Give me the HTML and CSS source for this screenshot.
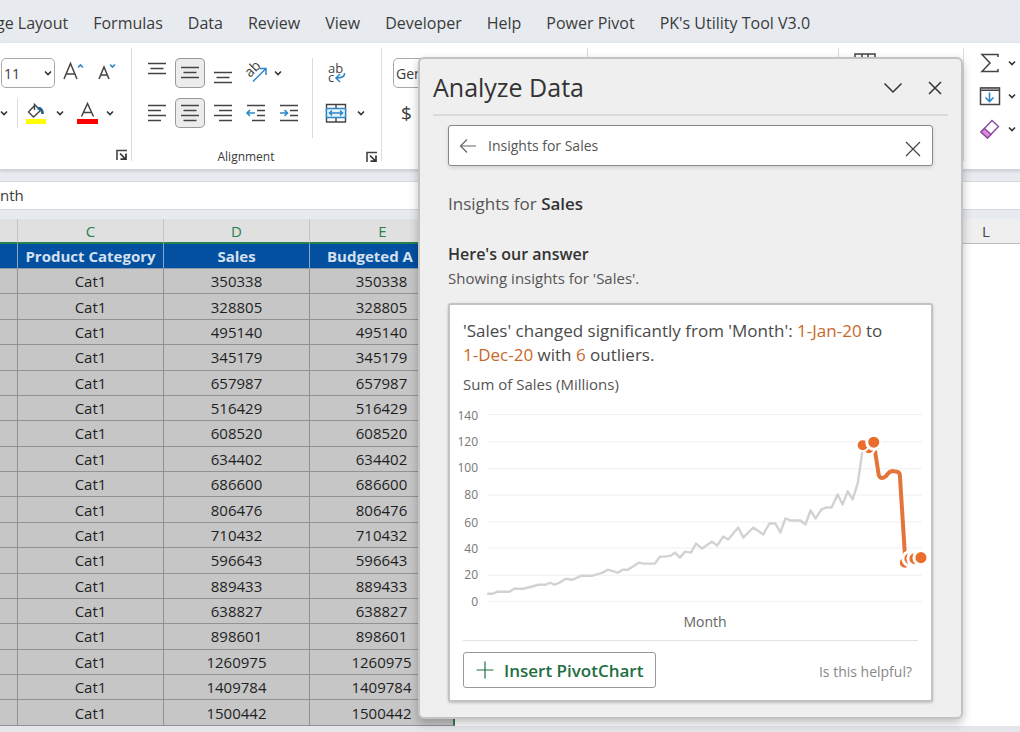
FILE: index.html
```html
<!DOCTYPE html>
<html lang="en">
<head>
<meta charset="utf-8">
<title>Analyze Data</title>
<link rel="stylesheet" href="styles.css">
</head>
<body>
<svg class="defs" aria-hidden="true">
  <symbol id="chev" viewBox="0 0 8 8"><path d="M1 2.500L4 5.500L7 2.500" fill="none" stroke="#333" stroke-width="1.600"/></symbol>
  <symbol id="launcher" viewBox="0 0 12 12"><path d="M1 11V1.500H11" fill="none" stroke="#444" stroke-width="1.600"/><path d="M4 4.500L9 9.500M10 4.500V10.200H4.500" fill="none" stroke="#333" stroke-width="1.700"/></symbol>
</svg>
<div class="app">
  <nav class="tabs">
    <button class="tab">ge Layout</button>
    <button class="tab">Formulas</button>
    <button class="tab">Data</button>
    <button class="tab">Review</button>
    <button class="tab">View</button>
    <button class="tab">Developer</button>
    <button class="tab">Help</button>
    <button class="tab">Power Pivot</button>
    <button class="tab">PK's Utility Tool V3.0</button>
  </nav>

  <div class="ribbon">
    <section class="group group-font">
      <div class="row">
        <label class="combo combo-size"><select aria-label="Font size"><option>11</option></select><svg class="chev"><use href="#chev"/></svg></label>
        <button class="tool" aria-label="Increase font size"><svg viewBox="0 0 30 30"><path d="M5 21L11.500 5.500L18 21M7.200 16H15.800" fill="none" stroke="#444" stroke-width="1.500"/><path d="M19 9.500L21.500 7L24 9.500" fill="none" stroke="#2b88c8" stroke-width="1.600"/></svg></button>
        <button class="tool" aria-label="Decrease font size"><svg viewBox="0 0 30 30"><path d="M8 21L13 9L18 21M9.500 17H16.500" fill="none" stroke="#444" stroke-width="1.500"/><path d="M19 6.500L21.500 9L24 6.500" fill="none" stroke="#2b88c8" stroke-width="1.600"/></svg></button>
      </div>
      <div class="row">
        <button class="drop" aria-label="Border options"><svg class="chev"><use href="#chev"/></svg></button>
        <span class="rule"></span>
        <button class="tool" aria-label="Fill color"><svg viewBox="0 0 30 30"><path d="M13 7L6.500 14L11.500 19L18.500 12.500L12.500 6.500V12" fill="none" stroke="#444" stroke-width="1.400"/><path d="M15.500 10.500Q20.500 9.500 20.500 16" fill="none" stroke="#1f6391" stroke-width="2.600"/><path d="M4 21H24V26H4Z" fill="#ff0"/></svg></button>
        <button class="drop" aria-label="Fill color options"><svg class="chev"><use href="#chev"/></svg></button>
        <button class="tool" aria-label="Font color"><svg viewBox="0 0 30 30"><path d="M9.500 18.500L15.500 5.500L21.500 18.500M11.500 14.500H19.500" fill="none" stroke="#444" stroke-width="1.500"/><path d="M5 21H26V26H5Z" fill="#f00"/></svg></button>
        <button class="drop" aria-label="Font color options"><svg class="chev"><use href="#chev"/></svg></button>
      </div>
      <footer class="foot"><button class="launch" aria-label="Font settings"><svg><use href="#launcher"/></svg></button></footer>
    </section>

    <section class="group group-align">
      <div class="align-tools">
        <div class="align-main">
          <div class="row row-tight">
            <button class="tool" aria-label="Top align"><svg class="ln" viewBox="0 0 30 30"><path d="M6 5.500H24M8.500 10.500H21.500M6 15.500H24"/></svg></button>
            <button class="tool on" aria-label="Middle align"><svg class="ln" viewBox="0 0 30 30"><path d="M6 9.500H24M8.500 14.500H21.500M6 19.500H24"/></svg></button>
            <button class="tool" aria-label="Bottom align"><svg class="ln" viewBox="0 0 30 30"><path d="M6 14.500H24M8.500 19.500H21.500M6 24.500H24"/></svg></button>
            <button class="tool" aria-label="Orientation"><svg viewBox="0 0 30 30"><text x="9" y="20" transform="rotate(-45 9 20)" class="ab ab-turned">ab</text><path d="M12 23.500L24.500 11M18.500 10.500H25V17" fill="none" stroke="#2b88c8" stroke-width="1.500"/></svg></button>
            <button class="drop drop-near" aria-label="Orientation options"><svg class="chev"><use href="#chev"/></svg></button>
          </div>
          <div class="row row-tight">
            <button class="tool" aria-label="Align left"><svg class="ln" viewBox="0 0 30 30"><path d="M6 7.500H24M6 12.500H19M6 17.500H24M6 22.500H19"/></svg></button>
            <button class="tool on" aria-label="Center"><svg class="ln" viewBox="0 0 30 30"><path d="M6 7.500H24M8.500 12.500H21.500M6 17.500H24M8.500 22.500H21.500"/></svg></button>
            <button class="tool" aria-label="Align right"><svg class="ln" viewBox="0 0 30 30"><path d="M6 7.500H24M11 12.500H24M6 17.500H24M11 22.500H24"/></svg></button>
            <button class="tool" aria-label="Decrease indent"><svg class="ln" viewBox="0 0 30 30"><path d="M6 7.500H24M16 12.500H24M16 17.500H24M11 22.500H24"/><path d="M14 15H6M9 12L6 15L9 18" class="blue"/></svg></button>
            <button class="tool" aria-label="Increase indent"><svg class="ln" viewBox="0 0 30 30"><path d="M6 7.500H24M16 12.500H24M16 17.500H24M6 22.500H24"/><path d="M6 15H13.500M10.500 12L13.500 15L10.500 18" class="blue"/></svg></button>
          </div>
        </div>
        <div class="align-extra">
          <div class="row row-tight">
            <button class="tool" aria-label="Wrap text"><svg viewBox="0 0 30 30"><text x="7" y="15" class="ab">ab</text><text x="7" y="24" class="ab">c</text><path d="M23.500 15Q24 20 15.500 20M19 16L15 20L19 24" fill="none" stroke="#2b88c8" stroke-width="1.500"/></svg></button>
          </div>
          <div class="row row-tight">
            <button class="tool" aria-label="Merge and center"><svg viewBox="0 0 30 30"><path d="M5.500 6.500H24.500V24H5.500ZM15 6.500V10.500M15 20V24" fill="#fff" stroke="#444" stroke-width="1.400"/><path d="M5.500 10.500H24.500V19.500H5.500Z" fill="#eaf4fb" stroke="#2b88c8" stroke-width="1.400"/><path d="M8.500 15H21.500M11 12.500L8.500 15L11 17.500M19 12.500L21.500 15L19 17.500" fill="none" stroke="#2b88c8" stroke-width="1.500"/></svg></button>
            <button class="drop" aria-label="Merge options"><svg class="chev"><use href="#chev"/></svg></button>
          </div>
        </div>
      </div>
      <footer class="foot"><span class="caption">Alignment</span><button class="launch" aria-label="Alignment settings"><svg><use href="#launcher"/></svg></button></footer>
    </section>

    <section class="group group-number">
      <div class="row"><label class="combo combo-format"><select aria-label="Number format"><option>General</option></select></label></div>
      <div class="row"><button class="currency" aria-label="Currency format">$</button></div>
    </section>
    <section class="group group-styles"></section>
    <section class="group group-cells">
      <svg class="cells-icon" viewBox="0 0 22 18"><path d="M1 1H21V17H1ZM1 6H21M1 11H21M8 1V17M14 1V17" fill="none" stroke="#444" stroke-width="1.500"/></svg>
    </section>
    <section class="group group-edit">
      <div class="edit-row"><button class="edit" aria-label="AutoSum"><svg viewBox="0 0 22 22"><path d="M19 5V2.500H3L11 11L3 19.500H19V17" fill="none" stroke="#444" stroke-width="1.500"/></svg></button><button class="drop" aria-label="AutoSum options"><svg class="chev"><use href="#chev"/></svg></button></div>
      <div class="edit-row"><button class="edit" aria-label="Fill"><svg viewBox="0 0 22 22"><path d="M1.500 3H20.500V19.500H1.500Z" fill="#fff" stroke="#444" stroke-width="1.500"/><path d="M1.500 3H20.500V5.500H1.500Z" fill="#999" stroke="#444"/><path d="M10.500 7.500V16.500M6.500 12.500L10.500 16.500L14.500 12.500" fill="none" stroke="#2b88c8" stroke-width="1.600"/></svg></button><button class="drop" aria-label="Fill options"><svg class="chev"><use href="#chev"/></svg></button></div>
      <div class="edit-row"><button class="edit" aria-label="Clear"><svg viewBox="0 0 22 22"><path d="M2 14L13 2.500L19.500 8.500L8.500 20Z" fill="#fff" stroke="#8c4a9c" stroke-width="1.400"/><path d="M2 14L5.500 10.500L12 16.500L8.500 20Z" fill="#dd8be0" stroke="#8c4a9c" stroke-width="1.400"/></svg></button><button class="drop" aria-label="Clear options"><svg class="chev"><use href="#chev"/></svg></button></div>
    </section>
  </div>

  <div class="formula">nth</div>

  <table class="sheet">
    <colgroup><col class="c-edge"><col class="c-data"><col class="c-data"><col class="c-data"><col><col class="c-last"></colgroup>
    <thead>
      <tr class="letters"><th class="sel"></th><th class="sel">C</th><th class="sel">D</th><th class="sel">E</th><th></th><th class="last">L</th></tr>
      <tr class="titles"><th></th><th>Product Category</th><th>Sales</th><th class="cut">Budgeted A</th><td></td><td></td></tr>
    </thead>
    <tbody>
      <tr><td></td><td>Cat1</td><td>350338</td><td>350338</td></tr>
      <tr><td></td><td>Cat1</td><td>328805</td><td>328805</td></tr>
      <tr><td></td><td>Cat1</td><td>495140</td><td>495140</td></tr>
      <tr><td></td><td>Cat1</td><td>345179</td><td>345179</td></tr>
      <tr><td></td><td>Cat1</td><td>657987</td><td>657987</td></tr>
      <tr><td></td><td>Cat1</td><td>516429</td><td>516429</td></tr>
      <tr><td></td><td>Cat1</td><td>608520</td><td>608520</td></tr>
      <tr><td></td><td>Cat1</td><td>634402</td><td>634402</td></tr>
      <tr><td></td><td>Cat1</td><td>686600</td><td>686600</td></tr>
      <tr><td></td><td>Cat1</td><td>806476</td><td>806476</td></tr>
      <tr><td></td><td>Cat1</td><td>710432</td><td>710432</td></tr>
      <tr><td></td><td>Cat1</td><td>596643</td><td>596643</td></tr>
      <tr><td></td><td>Cat1</td><td>889433</td><td>889433</td></tr>
      <tr><td></td><td>Cat1</td><td>638827</td><td>638827</td></tr>
      <tr><td></td><td>Cat1</td><td>898601</td><td>898601</td></tr>
      <tr><td></td><td>Cat1</td><td>1260975</td><td>1260975</td></tr>
      <tr><td></td><td>Cat1</td><td>1409784</td><td>1409784</td></tr>
      <tr><td></td><td>Cat1</td><td>1500442</td><td>1500442</td></tr>
    </tbody>
  </table>

  <aside class="pane">
    <header class="pane-head">
      <h1>Analyze Data</h1>
      <button class="icon-btn" aria-label="Pane options"><svg viewBox="0 0 20 20"><path d="M1.500 6.500L10 15L18.500 6.500" fill="none" stroke="#333" stroke-width="1.500"/></svg></button>
      <button class="icon-btn" aria-label="Close pane"><svg viewBox="0 0 20 20"><path d="M4 5L16 17M16 5L4 17" fill="none" stroke="#333" stroke-width="1.500"/></svg></button>
    </header>
    <div class="pane-body">
      <div class="search">
        <button class="icon-btn" aria-label="Back"><svg viewBox="0 0 20 20"><path d="M18 10H3M9 3.500L2.500 10L9 16.500" fill="none" stroke="#666" stroke-width="1.200"/></svg></button>
        <input type="text" aria-label="Ask a question" value="Insights for Sales">
        <button class="icon-btn clear" aria-label="Clear"><svg viewBox="0 0 20 20"><path d="M3 3L17 17M17 3L3 17" fill="none" stroke="#444" stroke-width="1.200"/></svg></button>
      </div>
      <h2 class="topic">Insights for <strong>Sales</strong></h2>
      <h3 class="answer">Here's our answer</h3>
      <p class="note">Showing insights for 'Sales'.</p>

      <article class="card">
        <p class="insight">'Sales' changed significantly from 'Month': <em>1-Jan-20</em> to <em>1-Dec-20</em> with <em>6</em> outliers.</p>
        <p class="measure">Sum of Sales (Millions)</p>
        <svg class="chart" viewBox="0 0 479 236" role="img" aria-label="Sum of Sales by Month">
          <path class="grid" d="M37 11.500H470M37 38.500H470M37 65.500H470M37 91.500H470M37 118.500H470M37 144.500H470M37 171.500H470M37 197.500H470"/>
          <g class="ticks">
            <text x="28" y="17">140</text><text x="28" y="43">120</text><text x="28" y="69">100</text><text x="28" y="96">80</text><text x="28" y="123">60</text><text x="28" y="149">40</text><text x="28" y="175">20</text><text x="28" y="202">0</text>
          </g>
          <polyline class="series" points="37,190 42,190 47,188 59,188 64,185 73,185 81,183 88,181 95,181 100,179 104,181 109,179 115,175 122,176 131,172 142,172 152,169 157,166 167,169 172,166 177,166 188,159 193,160 204,160 209,153 214,153 220,152 224,149 229,154 234,148 240,149 245,140 251,145 261,138 266,142 272,133 277,136 287,124 292,134 302,124 312,131 318,120 324,120 329,129 334,115 339,117 349,117 354,121 359,107 364,115 370,106 375,104 380,104 386,91 391,101 396,88 401,96 406,80 411,46"/>
          <path class="outlier" d="M423 46L427 72Q429 77 434 73Q438 67 442 68Q448 68 448 72L453 151"/>
          <g class="dots">
            <circle cx="417" cy="45" r="6"/><circle cx="411" cy="42" r="6"/><circle class="big" cx="422" cy="39" r="7"/>
            <circle cx="453" cy="159" r="6"/><circle class="big" cx="458" cy="155" r="7"/><circle class="big" cx="463" cy="155" r="7"/><circle class="big" cx="469" cy="154" r="7"/>
          </g>
          <text class="axis" x="254" y="223">Month</text>
        </svg>
        <footer class="card-foot">
          <button class="insert"><svg viewBox="0 0 18 18"><path d="M9 0.500V17.500M0.500 9H17.500" fill="none" stroke="#1e6e42" stroke-width="1.200"/></svg>Insert PivotChart</button>
          <a class="helpful" href="#">Is this helpful?</a>
        </footer>
      </article>
    </div>
  </aside>
</div>
</body>
</html>
```

FILE: styles.css
```css
* { box-sizing: border-box; }
body { margin: 0; font-family: "Open Sans", "Noto Sans", sans-serif; color: #3b3b3b; background: #e4e6ec; }
button { padding: 0; border: 0; background: none; font: inherit; color: inherit; }
h1, h2, h3, p { margin: 0; font-weight: 400; }
svg { display: block; }
.defs { position: absolute; width: 0; height: 0; }

.app { position: relative; display: flex; flex-direction: column; min-height: 100vh; padding-bottom: 6px; overflow: hidden; background: linear-gradient(#e7ebef, #e7ebef 250px, #e4e6ec 250px); }

.tabs { display: flex; gap: 25px; height: 43px; padding-top: 3px; align-items: center; font-size: 16px; white-space: nowrap; margin-left: -4px; }

.ribbon { display: flex; height: 127px; padding: 5px 0 8px; background: #fff; border-bottom: 1px solid #d0d4d8; box-shadow: 0 1px 3px #c3c8cd; }
.group { display: flex; flex-direction: column; gap: 10px; padding-top: 10px; border-right: 1px solid #dcdcdc; flex: none; }
.group-font { width: 132px; }
.group-align { width: 250px; }
.group-number { width: 206px; padding-left: 11px; }
.group-styles { flex: 1; }
.group-cells { width: 125px; padding: 5px 0 0 15px; }
.group-edit { width: 56px; padding: 4px 0 0 15px; border: 0; gap: 11px; }
.row { display: flex; align-items: center; height: 30px; }
.combo { position: relative; display: block; height: 30px; }
.combo select { appearance: none; width: 100%; height: 30px; padding: 0 2px; border: 1px solid #a8a8a8; border-radius: 5px; background: #fff; font: 14px "Open Sans", sans-serif; color: #3b3b3b; }
.combo-size { width: 55px; padding-left: 1px; margin-right: 4px; }
.combo-size .chev { position: absolute; right: 3px; top: 11px; }
.combo-format { width: 150px; }
.group-font .tool + .tool { margin-left: 2px; }
.tool { width: 30px; height: 30px; border-radius: 5px; flex: none; }
.tool svg { width: 30px; height: 30px; }
.tool.on { background: #ececec; box-shadow: inset 0 0 0 1px #999; }
.chev { width: 8px; height: 8px; }
.drop { display: grid; place-items: center; width: 14px; height: 22px; flex: none; }
.group-font .drop { width: 16px; margin-right: 4px; }
.group-font .drop:first-child { width: 8px; margin-right: 0; }
.drop-near { margin-left: -3px; }
.rule { width: 1px; height: 30px; margin: 0 4px 0 9px; background: #dcdcdc; }
.ln { fill: none; stroke: #444; stroke-width: 1.4; }
.ln .blue { stroke: #2b88c8; stroke-width: 1.6; }
.ab { font-size: 13px; fill: #444; }
.ab-turned { font-size: 14px; }
.align-tools { display: flex; padding-left: 10px; }
.align-main { display: grid; gap: 10px; width: 171px; height: 80px; align-content: start; border-right: 1px solid #dcdcdc; }
.align-extra { display: grid; gap: 10px; align-content: start; padding-left: 8px; }
.row-tight { gap: 3px; }
.foot { display: flex; align-items: center; justify-content: flex-end; height: 18px; padding-right: 3px; margin-top: 10px; font-size: 12px; line-height: 18px; }
.group-align .foot { margin-top: 0; }
.caption { flex: 1; text-align: center; padding-right: 6px; }
.launch svg { width: 12px; height: 12px; }
.currency { padding-left: 8px; font-size: 19px; }
.cells-icon { width: 22px; height: 18px; }
.edit-row { display: flex; align-items: center; gap: 4px; height: 22px; }
.edit svg { width: 22px; height: 22px; }

.formula { display: flex; align-items: center; height: 29px; margin: 11px 0 9px; padding-bottom: 2px; background: #fff; border: solid #d5d8dc; border-width: 1px 0; font-size: 15px; }

.sheet { flex: 1; width: 100%; height: 508px; border-collapse: separate; border-spacing: 0; table-layout: fixed; background: #fff; font-size: 15px; color: #1f1f1f; }
.c-edge { width: 17px; }
.c-data { width: 146px; }
.c-last { width: 107px; }
.sheet th, .sheet td { padding: 0; text-align: center; line-height: 20px; white-space: nowrap; overflow: hidden; }
.letters { height: 25px; }
.letters th { font-weight: 400; color: #444; background: #efefef; border-bottom: 1px solid #bcbcbc; }
.letters .sel { color: #27804f; background: #e0e0e0; border-bottom: 2px solid #27804f; border-left: 1px solid #c4c4c4; }
.letters .last { text-align: left; padding-left: 69px; }
.titles { height: 25px; }
.titles th { background: #0450a0; color: #d5e0ee; font-weight: 700; border-left: 1px solid #8ba6c8; border-bottom: 1px solid #8d9bab; }
.sheet .titles .cut { text-align: left; padding-left: 17px; }
.sheet tbody td { background: #c6c6c6; border-left: 1px solid #929292; border-bottom: 1px solid #929292; }
.sheet tr > :first-child { border-left: 0; }
.sheet tbody td:last-child { border-right: 2px solid #27804f; }

.pane { position: absolute; left: 418px; right: 57px; top: 57px; bottom: 13px; display: flex; flex-direction: column; background: #efefef; border: 2px solid #c3c3c3; border-radius: 6px; box-shadow: 0 4px 10px #00000040; }
.pane-head { display: flex; align-items: center; gap: 22px; height: 57px; margin: 0 13px; padding-right: 3px; border-bottom: 2px solid #dadada; }
.pane-head h1 { flex: 1; font-size: 25px; color: #333; }
.icon-btn svg { width: 20px; height: 20px; }
.pane-body { flex: 1; display: flex; flex-direction: column; padding: 9px 28px 15px; }
.search { display: flex; align-items: center; gap: 10px; height: 41px; padding: 0 9px; background: #fff; border: 1px solid #888; border-radius: 3px; box-shadow: 0 2px 4px #0000001f; }
.search input { flex: 1; min-width: 0; padding: 0; border: 0; outline: 0; background: none; font: 14px "Open Sans", sans-serif; color: #555; }
.clear { padding-top: 6px; }
.topic { margin-top: 26px; font-size: 17px; line-height: 24px; color: #555; }
.topic strong { font-weight: 600; color: #333; }
.answer { margin-top: 26px; font-size: 16px; line-height: 24px; font-weight: 600; color: #333; }
.note { font-size: 15px; line-height: 24px; color: #555; }
.card { flex: 1; display: flex; flex-direction: column; margin-top: 13px; background: #fff; border: 2px solid #c3c3c3; border-radius: 3px; box-shadow: 0 1px 3px #00000033; }
.insight { padding: 14px 13px 0; font-size: 17px; line-height: 24px; color: #4a4a4a; }
.insight em { font-style: normal; color: #c8692c; white-space: nowrap; }
.measure { padding: 5px 13px 0; font-size: 15px; line-height: 24px; color: #555; }
.chart { width: 100%; margin-top: 7px; }
.grid { fill: none; stroke: #f0f0f0; }
.ticks { font-size: 12px; fill: #777; text-anchor: end; }
.axis { font-size: 14px; fill: #666; text-anchor: middle; }
.series { fill: none; stroke: #d2d2d2; stroke-width: 2.4; stroke-linejoin: round; }
.outlier { fill: none; stroke: #e4753a; stroke-width: 4; }
.dots { fill: #ea6d2c; stroke: #fff; stroke-width: 2; }
.dots .big { stroke-width: 3; }
.card-foot { flex: 1; display: flex; align-items: center; justify-content: space-between; margin: 0 13px; padding: 0 6px 0 0; border-top: 1px solid #e2e2e2; }
.insert { display: flex; align-items: center; gap: 10px; height: 36px; padding: 0 12px; border: 1px solid #999; border-radius: 3px; background: #fff; font-size: 17px; font-weight: 600; color: #1e6e42; }
.insert svg { width: 18px; height: 18px; }
.helpful { padding-top: 3px; font-size: 14px; color: #888; text-decoration: none; }
```
